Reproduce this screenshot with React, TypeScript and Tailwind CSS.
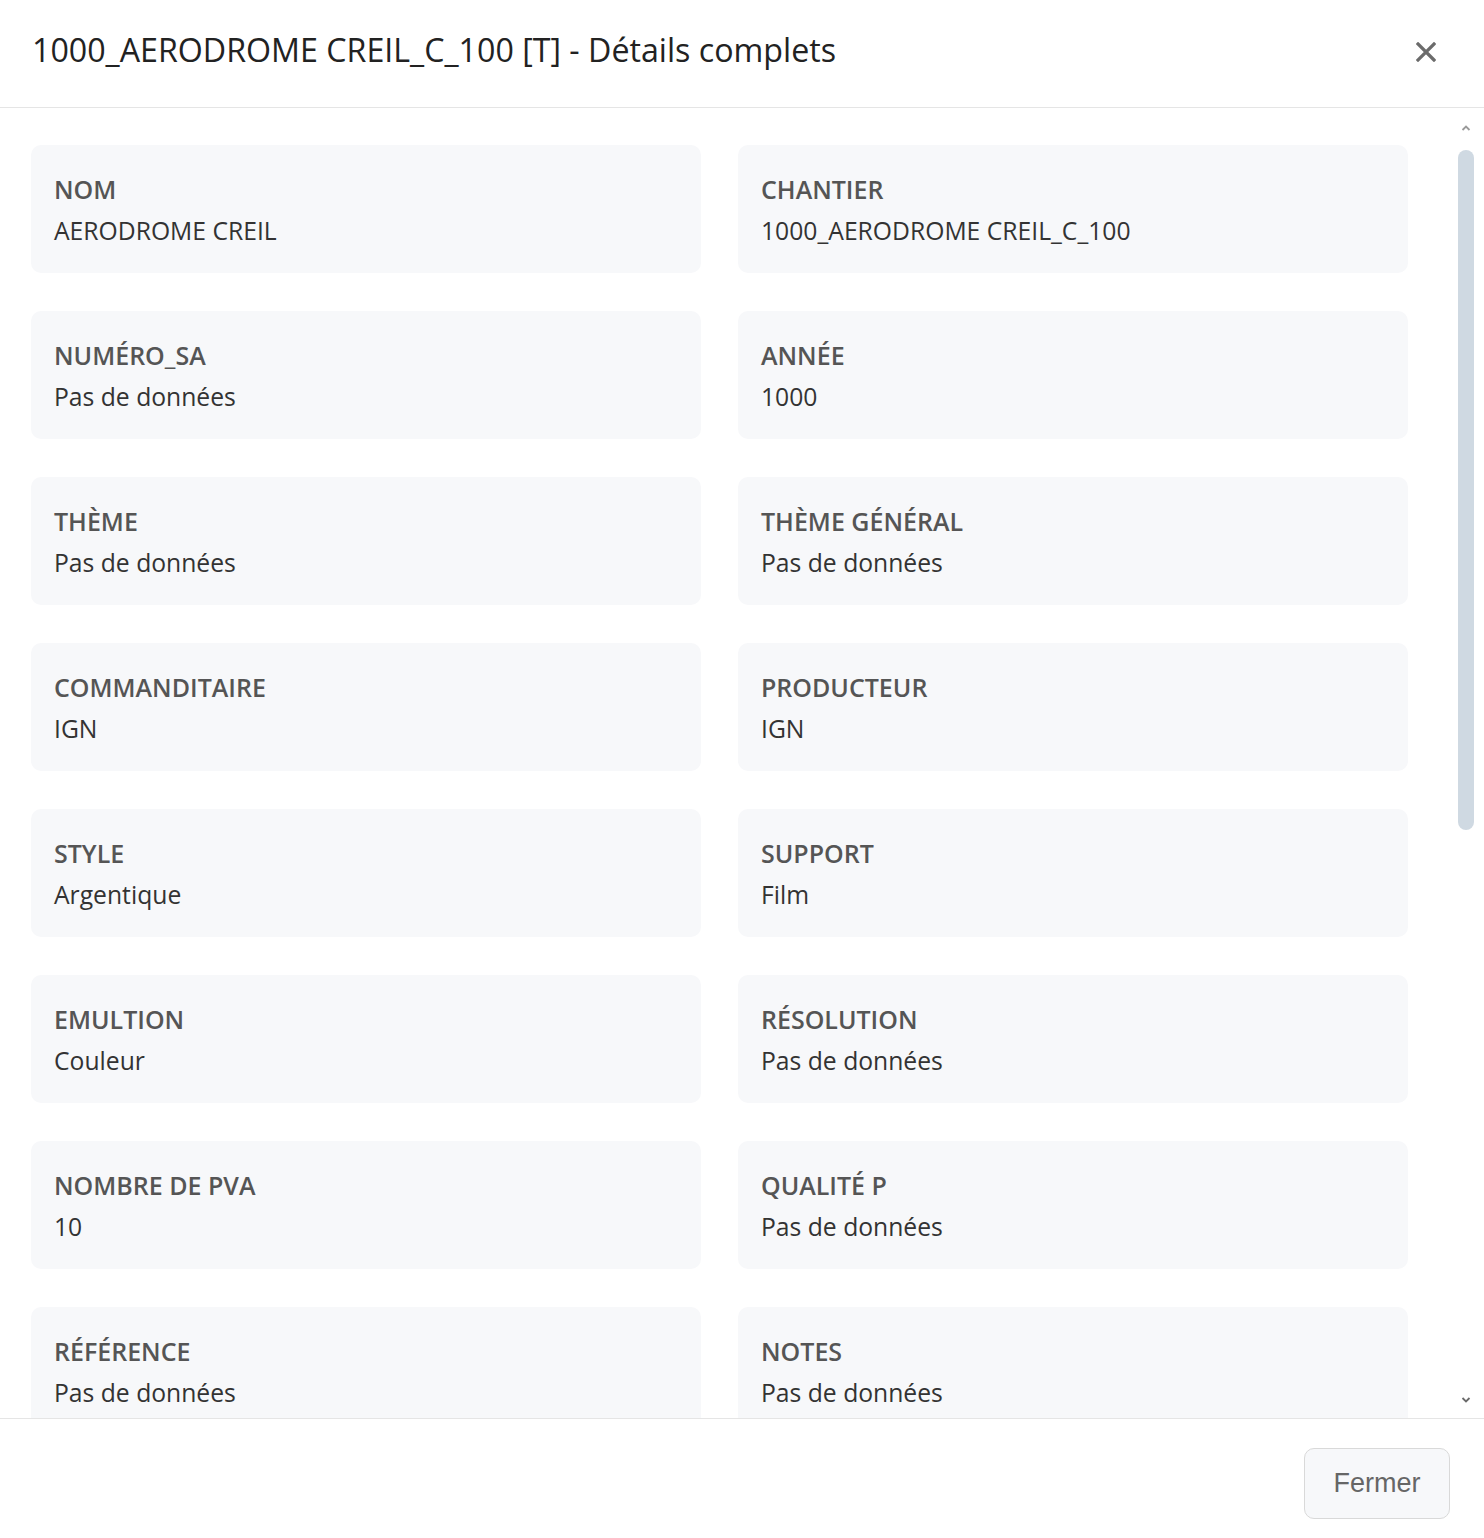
import React from "react";

const items: [string, string][] = [
  ["NOM", "AERODROME CREIL"],
  ["CHANTIER", "1000_AERODROME CREIL_C_100"],
  ["NUMÉRO_SA", "Pas de données"],
  ["ANNÉE", "1000"],
  ["THÈME", "Pas de données"],
  ["THÈME GÉNÉRAL", "Pas de données"],
  ["COMMANDITAIRE", "IGN"],
  ["PRODUCTEUR", "IGN"],
  ["STYLE", "Argentique"],
  ["SUPPORT", "Film"],
  ["EMULTION", "Couleur"],
  ["RÉSOLUTION", "Pas de données"],
  ["NOMBRE DE PVA", "10"],
  ["QUALITÉ P", "Pas de données"],
  ["RÉFÉRENCE", "Pas de données"],
  ["NOTES", "Pas de données"],
];

export default function App() {
  return (
    <div
      className="w-[1484px] h-[1538px] bg-white flex flex-col overflow-hidden"
      style={{ fontFamily: '"Open Sans", "Noto Sans", sans-serif' }}
    >
      <header className="h-[108px] shrink-0 flex items-center justify-between pl-[32px] pr-[48px] pb-[6px] border-b border-[#e5e5e5]">
        <h1 className="text-[32.2px] text-[#222]">
          1000_AERODROME CREIL_C_100 [T] - Détails complets
        </h1>
        <svg width="20" height="20" viewBox="0 0 20 20" className="mt-[2px]">
          <path d="M2 2 L18 18 M18 2 L2 18" stroke="#6b6b6b" strokeWidth="3.2" strokeLinecap="square" />
        </svg>
      </header>

      <div className="flex-1 flex min-h-0">
        <div className="flex-1 overflow-hidden pl-[31px] pr-[48px] pt-[37px]">
          <div className="grid grid-cols-2 gap-x-[37px] gap-y-[38px]">
            {items.map(([label, value]) => (
              <div
                key={label}
                className="h-[128px] bg-[#f7f8fa] rounded-[10px] px-[23px] pt-[26px] flex flex-col"
              >
                <div className="text-[25px] leading-[36px] font-semibold text-[#555]">{label}</div>
                <div className="text-[24.7px] leading-[36px] text-[#333] mt-[6px]">{value}</div>
              </div>
            ))}
          </div>
        </div>
        <div className="w-[28px] shrink-0 flex flex-col items-center pr-[8px] pt-[16px] pb-[14px]">
          <svg width="10" height="8" viewBox="0 0 10 8">
            <path d="M1.5 6 L5 2.5 L8.5 6" stroke="#9a9a9a" strokeWidth="1.8" fill="none" />
          </svg>
          <div className="flex-1 w-full flex flex-col items-center pt-[18px]">
            <div className="w-[16px] h-[680px] bg-[#cfd9e2] rounded-full" />
          </div>
          <svg width="10" height="8" viewBox="0 0 10 8">
            <path d="M1.5 2 L5 5.5 L8.5 2" stroke="#6a6a6a" strokeWidth="1.8" fill="none" />
          </svg>
        </div>
      </div>

      <footer className="h-[120px] shrink-0 border-t border-[#e5e5e5] flex justify-end items-start pt-[29px] pr-[34px]">
        <button
          className="w-[146px] h-[71px] rounded-[10px] border border-[#d9d9d9] bg-[#f7f8fa] text-[27px] text-[#666]"
          style={{ fontFamily: '"Liberation Sans", Arial, sans-serif' }}
        >
          Fermer
        </button>
      </footer>
    </div>
  );
}
